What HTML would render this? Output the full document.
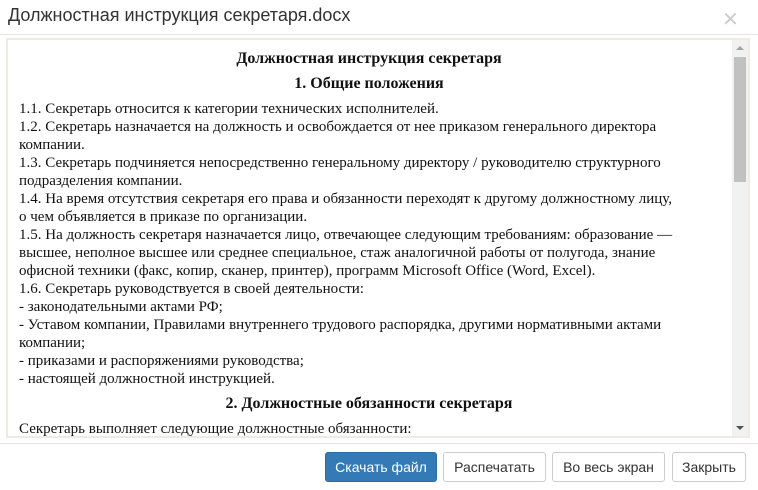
<!DOCTYPE html>
<html><head><meta charset="utf-8"><style>
body{margin:0;width:758px;height:490px;background:#fff;font-family:"Liberation Sans",sans-serif;position:relative;overflow:hidden}
.hdr{position:absolute;left:8px;top:5px;font-size:18px;color:#333}
.x{position:absolute;left:722px;top:7px;font-size:20px;color:#ccc;font-weight:300}
.hl{position:absolute;left:0;right:0;top:34px;border-top:1px solid #e5e5e5}
.frame{position:absolute;left:6px;top:38px;width:740px;height:396px;border:2px solid #efebe2;overflow:hidden}
.doc{position:absolute;left:11px;top:10px;width:700px;font-family:"Liberation Serif",serif;font-size:15px;line-height:18px;color:#111}
.doc h1,.doc h2{text-align:center;font-size:16px;margin:0}
.doc h1{margin-bottom:7px}
.doc h2{margin-bottom:7px}
.doc p{margin:0}
.sb{position:absolute;left:724px;top:0;width:16px;height:396px;background:#f1f1f1}
.th{position:absolute;left:2px;top:17px;width:12px;height:125px;background:#c1c1c1}
.ua,.da{position:absolute;left:4px;width:0;height:0;border-left:4px solid transparent;border-right:4px solid transparent}
.ua{top:6px;border-bottom:4px solid #a3a3a3}
.da{bottom:6px;border-top:4px solid #505050}
.fl{position:absolute;left:0;right:0;top:443px;border-top:1px solid #e5e5e5}
.b{position:absolute;top:452px;height:30px;box-sizing:border-box;border:1px solid #ccc;border-radius:3px;font-size:14px;line-height:28px;text-align:center;color:#333;background:#fff}
.p{background:#337ab7;border-color:#2e6da4;color:#fff}
</style></head><body>
<div class="hdr">Должностная инструкция секретаря.docx</div>
<div class="x">✕</div>
<div class="hl"></div>
<div class="frame">
<div class="doc">
<h1>Должностная инструкция секретаря</h1>
<h2>1. Общие положения</h2>
<p>1.1. Секретарь относится к категории технических исполнителей.<br>
1.2. Секретарь назначается на должность и освобождается от нее приказом генерального директора<br>компании.<br>
1.3. Секретарь подчиняется непосредственно генеральному директору / руководителю структурного<br>подразделения компании.<br>
1.4. На время отсутствия секретаря его права и обязанности переходят к другому должностному лицу,<br>о чем объявляется в приказе по организации.<br>
1.5. На должность секретаря назначается лицо, отвечающее следующим требованиям: образование —<br>высшее, неполное высшее или среднее специальное, стаж аналогичной работы от полугода, знание<br>офисной техники (факс, копир, сканер, принтер), программ Microsoft Office (Word, Excel).<br>
1.6. Секретарь руководствуется в своей деятельности:<br>
- законодательными актами РФ;<br>
- Уставом компании, Правилами внутреннего трудового распорядка, другими нормативными актами<br>компании;<br>
- приказами и распоряжениями руководства;<br>
- настоящей должностной инструкцией.</p>
<h2 style="margin-top:7px">2. Должностные обязанности секретаря</h2>
<p>Секретарь выполняет следующие должностные обязанности:</p>
</div>
<div class="sb"><div class="ua"></div><div class="th"></div><div class="da"></div></div>
</div>
<div class="fl"></div>
<div class="b p" style="left:325px;width:112px">Скачать файл</div>
<div class="b" style="left:443px;width:103px">Распечатать</div>
<div class="b" style="left:552px;width:113px">Во весь экран</div>
<div class="b" style="left:672px;width:74px">Закрыть</div>
</body></html>
